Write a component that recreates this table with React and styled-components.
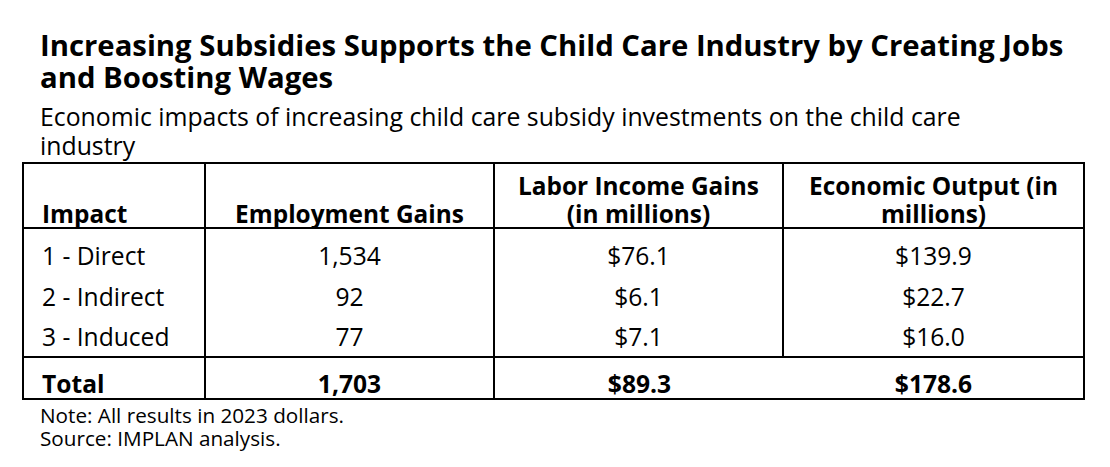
import styled, { createGlobalStyle } from "styled-components";

const GlobalStyle = createGlobalStyle`
    body {
        margin: 0;
        background: #fff;
        font-family: "Open Sans", "Liberation Sans", sans-serif;
        color: #000;
    }
`;

const rows = [
    { impact: "1 - Direct", jobs: "1,534", income: "$76.1", output: "$139.9", pad: 6, line: 41 },
    { impact: "2 - Indirect", jobs: "92", income: "$6.1", output: "$22.7", pad: 0, line: 41 },
    { impact: "3 - Induced", jobs: "77", income: "$7.1", output: "$16.0", pad: 0, line: 39 },
];

function App() {
    return (
        <Page>
            <GlobalStyle />
            <Heading>
                Increasing Subsidies Supports the Child Care Industry by Creating Jobs
                <br />
                and Boosting Wages
            </Heading>
            <Subtitle>
                Economic impacts of increasing child care subsidy investments on the child care
                <br />
                industry
            </Subtitle>
            <Table>
                <thead>
                    <tr>
                        <HeadCell $w={182} $left>Impact</HeadCell>
                        <HeadCell $w={289}>Employment Gains</HeadCell>
                        <HeadCell $w={289}>
                            Labor Income Gains
                            <br />
                            (in millions)
                        </HeadCell>
                        <HeadCell $w={299} $last>
                            Economic Output (in
                            <br />
                            millions)
                        </HeadCell>
                    </tr>
                </thead>
                <tbody>
                    {rows.map((r) => (
                        <tr key={r.impact}>
                            <Cell $left $pad={r.pad} $line={r.line}>{r.impact}</Cell>
                            <Cell $pad={r.pad} $line={r.line}>{r.jobs}</Cell>
                            <Cell $pad={r.pad} $line={r.line}>{r.income}</Cell>
                            <Cell $pad={r.pad} $line={r.line} $last>{r.output}</Cell>
                        </tr>
                    ))}
                    <tr>
                        <TotalCell $left>Total</TotalCell>
                        <TotalCell>1,703</TotalCell>
                        <TotalCell $last>$89.3</TotalCell>
                        <TotalCell $last>$178.6</TotalCell>
                    </tr>
                </tbody>
            </Table>
            <Notes>
                <p>Note: All results in 2023 dollars.</p>
                <p>Source: IMPLAN analysis.</p>
            </Notes>
        </Page>
    );
}

export default App;

const Page = styled.div`
    width: 1110px;
    height: 467px;
    padding: 29px 20px 0 22px;
    box-sizing: border-box;
    overflow: hidden;
`;

const Heading = styled.h1`
    margin: 0;
    padding-left: 18px;
    font-size: 29.3px;
    line-height: 32px;
    font-weight: 700;
    white-space: nowrap;
`;

const Subtitle = styled.div`
    margin-top: 9px;
    padding-left: 18px;
    font-size: 24.8px;
    line-height: 29px;
    white-space: nowrap;
`;

const Table = styled.table`
    margin-top: 2px;
    width: 1061px;
    border-collapse: separate;
    border-spacing: 0;
    table-layout: fixed;
    border: 2px solid #000;
    font-size: 24.6px;

    th,
    td {
        box-sizing: border-box;
        padding-right: 8px;
        padding-left: 8px;
    }
`;

const HeadCell = styled.th`
    width: ${(p) => p.$w}px;
    height: 65px;
    padding-top: 0;
    padding-bottom: 0;
    vertical-align: bottom;
    text-align: ${(p) => (p.$left ? "left" : "center")};
    font-size: 24.4px;
    font-weight: 700;
    line-height: 27.5px;
    border-bottom: 2px solid #000;
    border-right: ${(p) => (p.$last ? "0" : "2px solid #000")};

    && {
        padding-left: ${(p) => (p.$left ? "18px" : "8px")};
    }
`;

const Cell = styled.td`
    padding-top: ${(p) => p.$pad}px;
    padding-bottom: 0;
    vertical-align: top;
    line-height: ${(p) => p.$line}px;
    text-align: ${(p) => (p.$left ? "left" : "center")};
    border-right: ${(p) => (p.$last ? "0" : "2px solid #000")};

    && {
        padding-left: ${(p) => (p.$left ? "18px" : "8px")};
    }
`;

const TotalCell = styled.td`
    padding-top: 12px;
    padding-bottom: 0;
    vertical-align: top;
    line-height: 28px;
    text-align: ${(p) => (p.$left ? "left" : "center")};
    font-weight: 700;
    border-top: 2px solid #000;
    border-right: ${(p) => (p.$last ? "0" : "2px solid #000")};

    && {
        padding-left: ${(p) => (p.$left ? "18px" : "8px")};
    }
`;

const Notes = styled.div`
    margin-top: 4px;
    padding-left: 18px;
    font-size: 20.7px;
    line-height: 23px;

    p {
        margin: 0;
    }
`;
